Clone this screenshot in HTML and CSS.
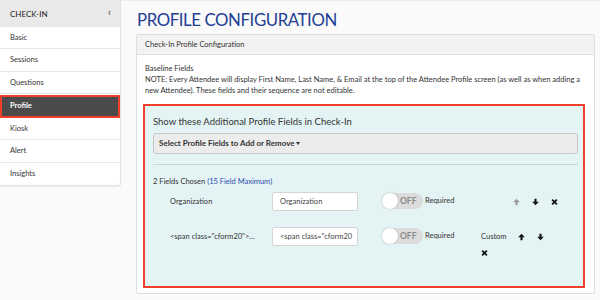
FILE: index.html
```html
<!DOCTYPE html>
<html>
<head>
<meta charset="utf-8">
<link rel="stylesheet" href="styles.css">
</head>
<body>
<div class="page">
  <aside class="sidebar">
    <div class="side-head"><span>CHECK-IN</span><span class="chev">&lsaquo;</span></div>
    <ul class="side-list">
      <li>Basic</li>
      <li>Sessions</li>
      <li>Questions</li>
      <li class="active">Profile</li>
      <li>Kiosk</li>
      <li>Alert</li>
      <li>Insights</li>
    </ul>
  </aside>
  <main class="main">
    <h1 class="title">PROFILE CONFIGURATION</h1>
    <section class="panel">
      <div class="panel-head">Check-In Profile Configuration</div>
      <div class="panel-body">
        <p class="note">Baseline Fields<br>NOTE: Every Attendee will display First Name, Last Name, &amp; Email at the top of the Attendee Profile screen (as well as when adding a new Attendee). These fields and their sequence are not editable.</p>
        <div class="fields-box">
          <h2 class="box-title">Show these Additional Profile Fields in Check-In</h2>
          <div class="select-btn">Select Profile Fields to Add or Remove <span class="caret"></span></div>
          <div class="sep"></div>
          <p class="chosen">2 Fields Chosen <span class="max">(15 Field Maximum)</span></p>
          <div class="field-row">
            <div class="f-label">Organization</div>
            <div class="f-input"><span class="f-val">Organization</span></div>
            <div class="toggle"><span class="knob"></span><span class="off">OFF</span></div>
            <div class="req">Required</div>
            <div class="actions">
              <span class="spacer"></span>
              <svg class="ico dim" viewBox="0 0 8 8"><path d="M4 0.3 L7.8 4.3 H5.2 V7.8 H2.8 V4.3 H0.2 Z"/></svg>
              <svg class="ico" viewBox="0 0 8 8"><path d="M4 7.7 L7.8 3.7 H5.2 V0.2 H2.8 V3.7 H0.2 Z"/></svg>
              <svg class="ico x" viewBox="0 0 8 8"><path d="M1.3 1.3 L6.7 6.7 M6.7 1.3 L1.3 6.7"/></svg>
            </div>
          </div>
          <div class="field-row">
            <div class="f-label">&lt;span class="cform20"&gt;...</div>
            <div class="f-input"><span class="f-val">&lt;span class="cform20</span></div>
            <div class="toggle"><span class="knob"></span><span class="off">OFF</span></div>
            <div class="req">Required</div>
            <div class="actions">
              <span class="custom">Custom</span>
              <svg class="ico" viewBox="0 0 8 8"><path d="M4 0.3 L7.8 4.3 H5.2 V7.8 H2.8 V4.3 H0.2 Z"/></svg>
              <svg class="ico" viewBox="0 0 8 8"><path d="M4 7.7 L7.8 3.7 H5.2 V0.2 H2.8 V3.7 H0.2 Z"/></svg>
              <svg class="ico x" viewBox="0 0 8 8"><path d="M1.3 1.3 L6.7 6.7 M6.7 1.3 L1.3 6.7"/></svg>
            </div>
          </div>
        </div>
      </div>
    </section>
  </main>
</div>
</body>
</html>
```
FILE: styles.css
```css
* { box-sizing: border-box; }
html, body { margin: 0; padding: 0; }
body {
  font-family: Lato, "Open Sans", sans-serif;
  color: #333;
  background: #fafafa;
  width: 600px;
  height: 300px;
  overflow: hidden;
}
.page {
  display: flex;
  align-items: flex-start;
  border-top: 1px solid #ececec;
}
.sidebar {
  width: 121px;
  flex: none;
  background: #fff;
  border-right: 1px solid #e2e2e2;
  border-bottom: 1px solid #e2e2e2;
  border-radius: 0 0 3px 0;
  box-shadow: 0 1px 2px rgba(0,0,0,0.06);
  margin-top: -1px;
}
.side-head {
  height: 27px;
  background: #e9e9e9;
  display: flex;
  align-items: center;
  justify-content: space-between;
  padding: 0 9px 0 10px;
  font-size: 8px;
  color: #222;
}
.chev { font-size: 12px; color: #555; line-height: 1; margin-top: -3px; }
.side-list { list-style: none; margin: 0; padding: 0; }
.side-list li {
  height: 22.33px;
  line-height: 21px;
  padding-left: 10px;
  font-size: 7.5px;
  color: #333;
  border-bottom: 1px solid #e6e6e6;
}
.side-list li:last-child { border-bottom: none; }
.side-list li.active {
  background: #4b4b4b;
  color: #fff;
  font-weight: 700;
  border: 2px solid #f0402c;
  line-height: 18px;
  padding-left: 8px;
  margin-top: 1px;
  height: 23px;
}
.main {
  flex: 1;
  padding: 0 5px 0 15px;
}
.title {
  margin: 0;
  padding: 9px 0 0 1px;
  height: 33px;
  font-size: 16.8px;
  letter-spacing: -0.4px;
  font-weight: 400;
  color: #233f94;
  line-height: 20px;
}
.panel {
  background: #fff;
  border: 1px solid #dedede;
  border-radius: 2px;
  height: 260px;
}
.panel-head {
  height: 20px;
  background: #f2f2f2;
  border-bottom: 1px solid #dedede;
  padding-left: 8px;
  font-size: 7.5px;
  line-height: 19px;
  color: #333;
}
.panel-body { padding: 8px 9px 0 6px; }
.note {
  margin: 0 0 8px 2px;
  font-size: 7.5px;
  line-height: 11px;
  color: #333;
}
.fields-box {
  border: 2px solid #f0402c;
  background: #e4f4f5;
  padding: 9px 5px 0 8px;
  height: 184px;
}
.box-title {
  margin: 0;
  font-size: 9.5px;
  font-weight: 400;
  line-height: 14px;
  color: #333;
}
.select-btn {
  margin-top: 4px;
  height: 21px;
  background: #ececec;
  border: 1px solid #c8c8c8;
  border-radius: 3px;
  padding-left: 5px;
  font-size: 8px;
  font-weight: 700;
  line-height: 19px;
  color: #333;
}
.caret {
  display: inline-block;
  width: 0; height: 0;
  border-left: 2.5px solid transparent;
  border-right: 2.5px solid transparent;
  border-top: 3px solid #333;
  vertical-align: middle;
  margin-left: 0;
}
.sep {
  height: 1px;
  background: #c9d4d5;
  margin-top: 10px;
}
.chosen {
  margin: 11px 0 0;
  font-size: 7.5px;
  line-height: 11px;
  color: #333;
}
.max { color: #2b4bad; }
.field-row {
  display: flex;
  align-items: flex-start;
  margin-top: 5px;
  padding-left: 17px;
}
.field-row + .field-row { margin-top: 16px; }
.f-label {
  width: 102px;
  flex: none;
  font-size: 7.5px;
  line-height: 19px;
  color: #333;
}
.f-input {
  width: 86px;
  height: 19px;
  flex: none;
  background: #fff;
  border: 1px solid #d4d4d4;
  border-radius: 2px;
  padding: 0 4px 0 7px;
  font-size: 7.5px;
  line-height: 17px;
  color: #444;
}
.f-val {
  display: block;
  white-space: nowrap;
}
.toggle {
  position: relative;
  margin: 1px 0 0 24px;
  width: 41px;
  height: 16px;
  flex: none;
  background: #dcdcdc;
  border-radius: 8px;
}
.knob {
  position: absolute;
  left: 0; top: 0;
  width: 16px; height: 16px;
  border-radius: 50%;
  background: #fff;
  box-shadow: 0 0 2px rgba(0,0,0,0.25);
}
.off {
  position: absolute;
  left: 18px; top: 0;
  font-size: 8.5px;
  font-weight: 700;
  line-height: 16px;
  color: #8a8a8a;
}
.req {
  width: 56px;
  flex: none;
  margin-left: 2px;
  font-size: 7.5px;
  line-height: 17px;
  color: #333;
}
.actions {
  width: 80px;
  flex: none;
  display: flex;
  flex-wrap: wrap;
  align-items: center;
  column-gap: 12px;
  row-gap: 2px;
  padding-top: 3px;
}
.actions > * { height: 14px; }
.spacer { width: 20px; }
.custom { font-size: 7.5px; line-height: 14px; color: #333; }
.ico { width: 7px; height: 14px; fill: #111; }
.ico.dim { fill: #999; }
.ico.x { fill: none; stroke: #111; stroke-width: 2; }
```
